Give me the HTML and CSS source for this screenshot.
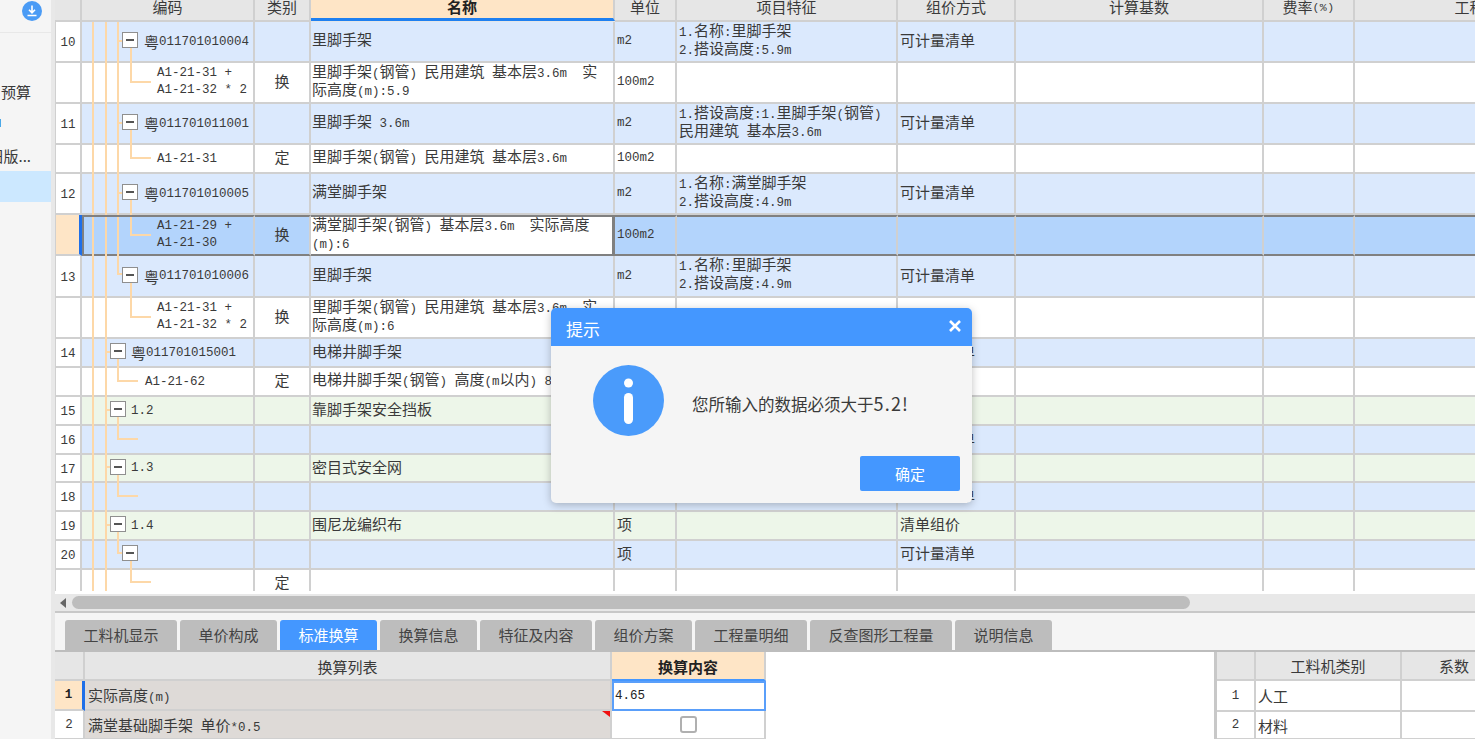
FILE: index.html
```html
<!DOCTYPE html>
<html lang="zh">
<head>
<meta charset="utf-8">
<title>标准换算</title>
<link rel="stylesheet" href="styles.css">
</head>
<body>
<div class="app">
  <aside class="side">
    <div class="side-top">
      <svg class="dl" viewBox="0 0 20 20" width="20" height="20"><circle cx="10" cy="10" r="10" fill="#4a9bf5"/><path d="M10 4.5v7M7 8.8l3 3 3-3M5.5 14.5h9" fill="none" stroke="#fff" stroke-width="1.6"/></svg>
    </div>
    <div class="side-item">预算</div>
    <div class="side-item"><span class="side-tick"></span></div>
    <div class="side-item">旧版...</div>
    <div class="side-item on"></div>
  </aside>
  <main class="main">
    <div class="sheet">
      <div class="r hd">
        <div class="c"></div><div class="c">编码</div><div class="c">类别</div><div class="c act">名称</div><div class="c">单位</div><div class="c">项目特征</div><div class="c">组价方式</div><div class="c">计算基数</div><div class="c">费率<span class="l sm">(%)</span></div><div class="c">工程量</div>
      </div>

      <div class="r blue h41">
        <div class="c n"><span class="l">10</span></div>
        <div class="c code lv3"><i class="g g1"></i><i class="g g2"></i><i class="g g3"></i><i class="stub s3"></i><i class="drop d3"></i><b class="box"></b>粤<span class="l">011701010004</span></div>
        <div class="c t"></div><div class="c"><p>里脚手架</p></div><div class="c"><span class="l">m2</span></div>
        <div class="c"><p><span class="l">1.</span>名称<span class="l">:</span>里脚手架<br><span class="l">2.</span>搭设高度<span class="l">:5.9m</span></p></div>
        <div class="c">可计量清单</div><div class="c"></div><div class="c"></div><div class="c"></div>
      </div>
      <div class="r wht h41">
        <div class="c n"></div>
        <div class="c code leaf3"><i class="g g1"></i><i class="g g2"></i><i class="g g3"></i><i class="el e3"></i><p class="l">A1-21-31 +<br>A1-21-32 * 2</p></div>
        <div class="c t">换</div>
        <div class="c"><p>里脚手架<span class="l">(</span>钢管<span class="l">) </span>民用建筑<span class="l"> </span>基本层<span class="l">3.6m  </span>实<br>际高度<span class="l">(m):5.9</span></p></div>
        <div class="c"><span class="l">100m2</span></div><div class="c"></div><div class="c"></div><div class="c"></div><div class="c"></div><div class="c"></div>
      </div>

      <div class="r blue h41">
        <div class="c n"><span class="l">11</span></div>
        <div class="c code lv3"><i class="g g1"></i><i class="g g2"></i><i class="g g3"></i><i class="stub s3"></i><i class="drop d3"></i><b class="box"></b>粤<span class="l">011701011001</span></div>
        <div class="c t"></div><div class="c"><p>里脚手架<span class="l"> 3.6m</span></p></div><div class="c"><span class="l">m2</span></div>
        <div class="c"><p><span class="l">1.</span>搭设高度<span class="l">:1.</span>里脚手架<span class="l">(</span>钢管<span class="l">)</span><br>民用建筑<span class="l"> </span>基本层<span class="l">3.6m</span></p></div>
        <div class="c">可计量清单</div><div class="c"></div><div class="c"></div><div class="c"></div>
      </div>
      <div class="r wht h29">
        <div class="c n"></div>
        <div class="c code leaf3"><i class="g g1"></i><i class="g g2"></i><i class="g g3"></i><i class="el e3"></i><span class="l">A1-21-31</span></div>
        <div class="c t">定</div>
        <div class="c"><p>里脚手架<span class="l">(</span>钢管<span class="l">) </span>民用建筑<span class="l"> </span>基本层<span class="l">3.6m</span></p></div>
        <div class="c"><span class="l">100m2</span></div><div class="c"></div><div class="c"></div><div class="c"></div><div class="c"></div><div class="c"></div>
      </div>

      <div class="r blue h41">
        <div class="c n"><span class="l">12</span></div>
        <div class="c code lv3"><i class="g g1"></i><i class="g g2"></i><i class="g g3"></i><i class="stub s3"></i><i class="drop d3"></i><b class="box"></b>粤<span class="l">011701010005</span></div>
        <div class="c t"></div><div class="c"><p>满堂脚手架</p></div><div class="c"><span class="l">m2</span></div>
        <div class="c"><p><span class="l">1.</span>名称<span class="l">:</span>满堂脚手架<br><span class="l">2.</span>搭设高度<span class="l">:4.9m</span></p></div>
        <div class="c">可计量清单</div><div class="c"></div><div class="c"></div><div class="c"></div>
      </div>
      <div class="r sel h41">
        <div class="c n"></div>
        <div class="c code leaf3"><i class="g g1"></i><i class="g g2"></i><i class="g g3"></i><i class="el e3"></i><p class="l">A1-21-29 +<br>A1-21-30</p></div>
        <div class="c t">换</div>
        <div class="c edit"><p>满堂脚手架<span class="l">(</span>钢管<span class="l">) </span>基本层<span class="l">3.6m  </span>实际高度<br><span class="l">(m):6</span></p></div>
        <div class="c"><span class="l">100m2</span></div><div class="c"></div><div class="c"></div><div class="c"></div><div class="c"></div><div class="c"></div>
      </div>

      <div class="r blue h42">
        <div class="c n"><span class="l">13</span></div>
        <div class="c code lv3"><i class="g g1"></i><i class="g g2"></i><i class="el short"></i><i class="drop d3"></i><b class="box"></b>粤<span class="l">011701010006</span></div>
        <div class="c t"></div><div class="c"><p>里脚手架</p></div><div class="c"><span class="l">m2</span></div>
        <div class="c"><p><span class="l">1.</span>名称<span class="l">:</span>里脚手架<br><span class="l">2.</span>搭设高度<span class="l">:4.9m</span></p></div>
        <div class="c">可计量清单</div><div class="c"></div><div class="c"></div><div class="c"></div>
      </div>
      <div class="r wht h41">
        <div class="c n"></div>
        <div class="c code leaf3"><i class="g g1"></i><i class="g g2"></i><i class="el e3"></i><p class="l">A1-21-31 +<br>A1-21-32 * 2</p></div>
        <div class="c t">换</div>
        <div class="c"><p>里脚手架<span class="l">(</span>钢管<span class="l">) </span>民用建筑<span class="l"> </span>基本层<span class="l">3.6m  </span>实<br>际高度<span class="l">(m):6</span></p></div>
        <div class="c"><span class="l">100m2</span></div><div class="c"></div><div class="c"></div><div class="c"></div><div class="c"></div><div class="c"></div>
      </div>

      <div class="r blue h29">
        <div class="c n"><span class="l">14</span></div>
        <div class="c code lv2"><i class="g g1"></i><i class="g g2"></i><i class="stub s2"></i><i class="drop d2"></i><b class="box"></b>粤<span class="l">011701015001</span></div>
        <div class="c t"></div><div class="c">电梯井脚手架</div><div class="c"><span class="l">m2</span></div><div class="c"></div>
        <div class="c">可计量清单</div><div class="c"></div><div class="c"></div><div class="c"></div>
      </div>
      <div class="r wht h29">
        <div class="c n"></div>
        <div class="c code leaf2"><i class="g g1"></i><i class="g g2"></i><i class="el e2"></i><span class="l">A1-21-62</span></div>
        <div class="c t">定</div>
        <div class="c"><p>电梯井脚手架<span class="l">(</span>钢管<span class="l">) </span>高度<span class="l">(m</span>以内<span class="l">) 8</span></p></div>
        <div class="c"></div><div class="c"></div><div class="c"></div><div class="c"></div><div class="c"></div><div class="c"></div>
      </div>

      <div class="r grn h29">
        <div class="c n"><span class="l">15</span></div>
        <div class="c code lv2"><i class="g g1"></i><i class="g g2"></i><i class="stub s2"></i><i class="drop d2"></i><b class="box"></b><span class="l">1.2</span></div>
        <div class="c t"></div><div class="c">靠脚手架安全挡板</div><div class="c">项</div><div class="c"></div>
        <div class="c">清单组价</div><div class="c"></div><div class="c"></div><div class="c"></div>
      </div>
      <div class="r blue h29">
        <div class="c n"><span class="l">16</span></div>
        <div class="c code"><i class="g g1"></i><i class="g g2"></i><i class="el e2"></i></div>
        <div class="c t"></div><div class="c"></div><div class="c">项</div><div class="c"></div>
        <div class="c">可计量清单</div><div class="c"></div><div class="c"></div><div class="c"></div>
      </div>
      <div class="r grn h28">
        <div class="c n"><span class="l">17</span></div>
        <div class="c code lv2"><i class="g g1"></i><i class="g g2"></i><i class="stub s2"></i><i class="drop d2"></i><b class="box"></b><span class="l">1.3</span></div>
        <div class="c t"></div><div class="c">密目式安全网</div><div class="c">项</div><div class="c"></div>
        <div class="c">清单组价</div><div class="c"></div><div class="c"></div><div class="c"></div>
      </div>
      <div class="r blue h29">
        <div class="c n"><span class="l">18</span></div>
        <div class="c code"><i class="g g1"></i><i class="g g2"></i><i class="el e2"></i></div>
        <div class="c t"></div><div class="c"></div><div class="c">项</div><div class="c"></div>
        <div class="c">可计量清单</div><div class="c"></div><div class="c"></div><div class="c"></div>
      </div>
      <div class="r grn h29">
        <div class="c n"><span class="l">19</span></div>
        <div class="c code lv2"><i class="g g1"></i><i class="g g2"></i><i class="stub s2"></i><i class="drop d2"></i><b class="box"></b><span class="l">1.4</span></div>
        <div class="c t"></div><div class="c">围尼龙编织布</div><div class="c">项</div><div class="c"></div>
        <div class="c">清单组价</div><div class="c"></div><div class="c"></div><div class="c"></div>
      </div>
      <div class="r blue h29">
        <div class="c n"><span class="l">20</span></div>
        <div class="c code lv3"><i class="g g1"></i><i class="g g2"></i><i class="el short"></i><i class="drop d3"></i><b class="box"></b></div>
        <div class="c t"></div><div class="c"></div><div class="c">项</div><div class="c"></div>
        <div class="c">可计量清单</div><div class="c"></div><div class="c"></div><div class="c"></div>
      </div>
      <div class="r wht h28">
        <div class="c n"></div>
        <div class="c code"><i class="g g1"></i><i class="g g2"></i><i class="el e3"></i></div>
        <div class="c t">定</div>
        <div class="c"></div><div class="c"></div><div class="c"></div><div class="c"></div><div class="c"></div><div class="c"></div><div class="c"></div>
      </div>
    </div>

    <div class="hscroll">
      <div class="track"><i class="arrow"></i><i class="thumb"></i></div>
    </div>

    <div class="tabs">
      <div class="tab w112">工料机显示</div>
      <div class="tab">单价构成</div>
      <div class="tab on">标准换算</div>
      <div class="tab">换算信息</div>
      <div class="tab w112">特征及内容</div>
      <div class="tab">组价方案</div>
      <div class="tab w112">工程量明细</div>
      <div class="tab w142">反查图形工程量</div>
      <div class="tab">说明信息</div>
    </div>

    <div class="lower">
      <div class="conv">
        <div class="cv hdc"></div><div class="cv hdc">换算列表</div><div class="cv hdc act2">换算内容</div>
        <div class="cv num cur"><b class="l">1</b></div><div class="cv lab"><p>实际高度<span class="l">(m)</span></p></div><div class="cv inp"><span class="l">4.65</span></div>
        <div class="cv num"><span class="l">2</span></div><div class="cv lab flag"><p>满堂基础脚手架<span class="l"> </span>单价<span class="l">*0.5</span></p><i class="tri"></i></div><div class="cv chk"><i class="cb"></i></div>
      </div>
      <div class="coef">
        <div class="cf hdc"></div><div class="cf hdc">工料机类别</div><div class="cf hdc">系数</div>
        <div class="cf num"><span class="l">1</span></div><div class="cf">人工</div><div class="cf"></div>
        <div class="cf num"><span class="l">2</span></div><div class="cf">材料</div><div class="cf"></div>
      </div>
    </div>
  </main>
</div>

<section class="dlg">
  <header class="dlg-head">
    <span>提示</span>
    <svg viewBox="0 0 12 12" width="12" height="12"><path d="M1 1l10 10M11 1L1 11" stroke="#fff" stroke-width="2.6" fill="none"/></svg>
  </header>
  <div class="dlg-body">
    <svg viewBox="0 0 71 71" width="71" height="71"><circle cx="35.5" cy="35.5" r="35.5" fill="#4a9bfb"/><circle cx="35.5" cy="18" r="4.5" fill="#fff"/><rect x="31" y="28" width="9" height="31" rx="4.5" fill="#fff"/></svg>
    <p class="dlg-msg">您所输入的数据必须大于<span class="dlg-num">5.2!</span></p>
  </div>
  <footer class="dlg-foot"><div class="btn">确定</div></footer>
</section>
</body>
</html>
```
FILE: styles.css
```css
* { box-sizing: border-box; }
html, body { margin: 0; height: 739px; overflow: hidden; background: #fff; }
body { font: 15px/17px "Noto Sans CJK SC", "Noto Sans", sans-serif; color: #3a3a3a; position: relative; }
p { margin: 0; }
i { display: block; }

.l { font-family: "Liberation Mono", monospace; font-size: 12.5px; line-height: 12px; white-space: pre; }
p.l { line-height: 17px; }
.sm { font-size: 11.5px; letter-spacing: .4px; margin-top: 2px; }

.app { display: flex; width: 1475px; height: 739px; }

/* sidebar */
.side { width: 55px; flex: none; background: #f5f5f5; border-right: 4px solid #e8e8e8; overflow: hidden; }
.side-top { height: 33px; border-bottom: 1px solid #e8e8e8; padding: 1px 0 0 22px; margin-bottom: 43px; }
.dl { display: block; }
.side-item { height: 32px; display: flex; justify-content: flex-end; align-items: center; padding: 0 20px 2px 0; white-space: nowrap; overflow: hidden; font-size: 15px; }
.side-item.on { background: #cce8ff; height: 31px; margin-top: -1px; }
.side-tick { width: 2px; height: 8px; background: #4aa8e8; margin-right: 30px; }

/* main column */
.main { flex: 1; min-width: 0; display: flex; flex-direction: column; overflow: hidden; }
.sheet { height: 591px; overflow: hidden; }

.r { display: grid; grid-template-columns: 27px 173px 56px 304px 62px 221px 118px 248px 91px 246px; width: 1546px; }
.h41 { height: 41px; } .h42 { height: 42px; } .h29 { height: 29px; } .h28 { height: 28px; }
.blue { background: #dbe9fd; } .wht { background: #fff; } .grn { background: #edf6e9; } .sel { background: #b3d4fc; }

.c { position: relative; display: flex; align-items: center; padding: 0 2px 4px 2px; white-space: pre; overflow: hidden; border-right: 2px solid #d0d0d0; border-bottom: 2px solid #d0d0d0; }
.c > p { margin-bottom: 2px; }
.c > .l { margin-top: 3px; }
.c:nth-child(4) { padding-left: 1px; }
.c.n { justify-content: center; padding: 0; background: #fff; border-left: 1px solid #d0d0d0; }
.c.t { justify-content: center; }
.c:nth-child(3) { justify-content: center; }

.hd { height: 22px; background: #e6e6e6; }
.hd .c { align-items: flex-start; justify-content: center; line-height: 13px; padding: 0; }
.hd .c > .l { margin-top: 2px; }
.hd .c.act { background: #fee5c6; font-weight: 700; color: #222; margin-bottom: 1px; border-bottom: 3px solid #1f80f0; border-right-color: #d0d0d0; }

/* tree column */
.code { overflow: visible; padding: 0; }
.code > .l { margin-top: 0; }
.lv3 { padding-left: 40px; }
.lv2 { padding-left: 28px; }
.leaf3 { padding-left: 75px; }
.leaf2 { padding-left: 63px; }
.box { flex: none; position: relative; width: 16px; height: 16px; background: #fff; border: 1px solid #8f8f8f; margin: -3px 6px 0 0; font-weight: 400; }
.lv2 .box { margin-right: 5px; }
.box::after { content: ""; position: absolute; left: 3px; right: 3px; top: 6px; height: 2px; background: #555; }
.g { position: absolute; top: 0; bottom: -2px; width: 2px; background: #fdd8a8; }
.g1 { left: 10px; } .g2 { left: 23px; } .g3 { left: 35px; }
.stub { position: absolute; top: calc(50% - 2px); height: 2px; background: #fdd8a8; }
.s3 { left: 36px; width: 4px; }
.s2 { left: 24px; width: 4px; }
.drop { position: absolute; top: calc(50% + 6px); bottom: -2px; width: 2px; background: #fdd8a8; }
.d3 { left: 48px; }
.d2 { left: 35px; }
.el { position: absolute; top: 0; height: 50%; border-left: 2px solid #fdd8a8; border-bottom: 2px solid #fdd8a8; }
.e3 { left: 48px; width: 21px; }
.e2 { left: 35px; width: 21px; }
.short { left: 35px; width: 6px; height: calc(50% - 1px); }

/* selected row */
.sel .c { border-top: 2px solid #808080; border-bottom-color: #808080; }
.sel .c.n { background: #fee5c6; border-top: none; border-bottom-color: #d0d0d0; border-right: 3px solid #1f6fe8; }
.sel .code { box-shadow: inset 2px 0 0 #808080; }
.sel .edit { background: #fff; border-right: 3px solid #808080; }

/* scrollbar */
.hscroll { height: 22px; padding-top: 3px; background: #fff; border-bottom: 2px solid #c8c8c8; flex: none; }
.track { height: 17px; background: #e8e8e8; display: flex; align-items: center; padding-left: 5px; }
.arrow { width: 0; height: 0; border-right: 6px solid #666; border-top: 5px solid transparent; border-bottom: 5px solid transparent; margin-right: 6px; }
.thumb { width: 1118px; height: 13px; background: #bdbdbd; border-radius: 7px; }

/* tabs */
.tabs { flex: none; height: 39px; padding: 7px 0 0 10px; background: #f5f5f5; border-bottom: 2px solid #bdbdbd; display: flex; gap: 3px; }
.tab { width: 97px; height: 30px; padding-bottom: 2px; background: #bdbdbd; border-radius: 3px 3px 0 0; display: flex; align-items: center; justify-content: center; color: #444; }
.tab.w112 { width: 112px; }
.tab.w142 { width: 142px; }
.tab.on { background: #4497ff; color: #fff; }

/* lower panels */
.lower { flex: 1; display: flex; justify-content: space-between; background: #fff; min-height: 0; }
.conv { display: grid; grid-template-columns: 30px 527px 154px; grid-template-rows: 29px 30px 29px; width: 711px; }
.cv { position: relative; display: flex; align-items: center; padding-left: 3px; border-right: 2px solid #d0d0d0; border-bottom: 2px solid #d0d0d0; white-space: pre; }
.hdc { background: #e6e6e6; justify-content: center; padding-left: 0; }
.cv.hdc { padding-top: 1px; }
.num { justify-content: center; padding-left: 0; background: #fff; }
.cur { background: #fee5c6; border-right: 3px solid #1f6fe8; color: #222; }
.lab { background: #dedad7; }
.act2 { background: #fee5c6; font-weight: 700; color: #222; border-bottom: 2px solid #4497ff; border-right-color: #d0d0d0; }
.inp { background: #fff; border: 2px solid #5a9ffa; color: #222; padding-left: 1px; }
.chk { justify-content: center; padding: 0; }
.cb { width: 17px; height: 17px; border: 2px solid #b0b0b0; border-radius: 3px; background: #fff; }
.tri { position: absolute; right: 0; top: 0; width: 0; height: 0; border-top: 6px solid #f01010; border-left: 8px solid transparent; }

.coef { width: 261px; display: grid; grid-template-columns: 39px 146px 106px; grid-template-rows: 29px 31px 28px; border-left: 3px solid #c8c8c8; overflow: hidden; }
.cf { display: flex; align-items: center; padding-left: 2px; border-right: 2px solid #d0d0d0; border-bottom: 2px solid #d0d0d0; }
.cf.hdc { padding-left: 0; }
.cf.num { padding-left: 0; }

/* dialog */
.dlg { position: absolute; left: 551px; top: 308px; width: 421px; height: 195px; background: #f5f5f5; border-radius: 5px; box-shadow: 0 2px 8px rgba(0,0,0,.25); overflow: hidden; display: flex; flex-direction: column; }
.dlg-head { height: 38px; flex: none; background: #4497ff; color: #fff; font-size: 17px; display: flex; align-items: center; justify-content: space-between; padding: 2px 11px 0 15px; }
.dlg-head svg { margin-top: -4px; }
.dlg-body { height: 110px; flex: none; display: flex; padding: 19px 0 0 42px; gap: 28px; }
.dlg-msg { font-size: 16.5px; line-height: 24px; margin-top: 26px; color: #3a3a3a; }
.dlg-num { font-size: 18px; letter-spacing: 1.2px; }
.dlg-foot { display: flex; justify-content: flex-end; padding-right: 12px; }
.btn { width: 100px; height: 35px; background: #4497ff; border-radius: 2px; color: #fff; display: flex; align-items: center; justify-content: center; }
```
